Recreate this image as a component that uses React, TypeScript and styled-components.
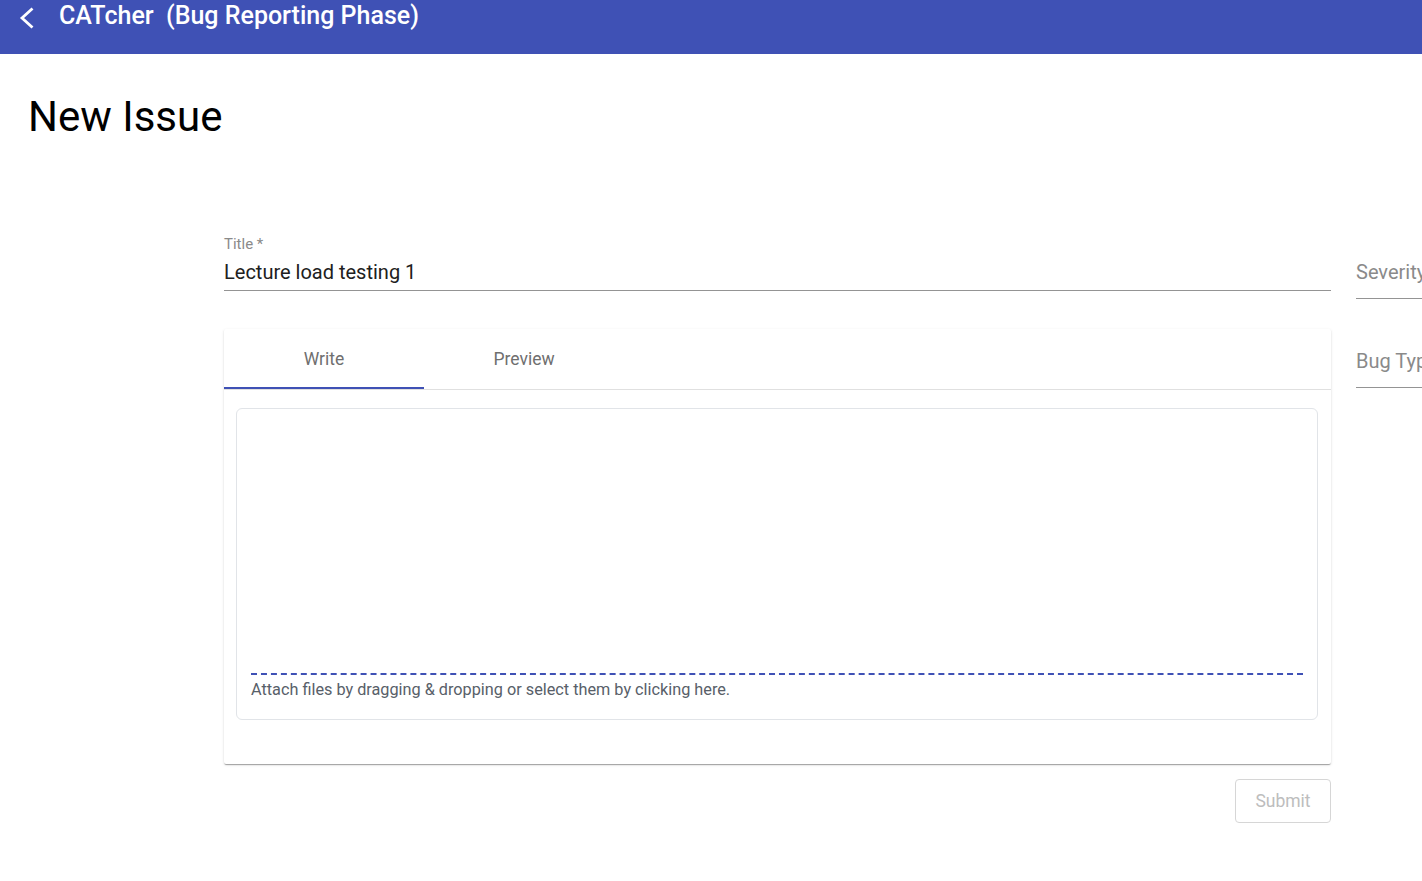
import React from "react";
import styled, { createGlobalStyle } from "styled-components";

const GlobalStyle = createGlobalStyle`
  html, body {
    margin: 0;
    padding: 0;
    background: #ffffff;
    font-family: Roboto, "Helvetica Neue", Arial, sans-serif;
    overflow: hidden;
  }
`;

const Toolbar = styled.header`
  height: 54px;
  background: #3f51b5;
  color: #ffffff;
  display: flex;
  align-items: flex-start;
  padding: 2px 0 0 14px;
  box-sizing: border-box;
`;

const BackButton = styled.button`
  background: none;
  border: none;
  padding: 0;
  width: 24px;
  height: 30px;
  display: flex;
  align-items: center;
  justify-content: center;
  color: #ffffff;
  cursor: pointer;
`;

const AppTitle = styled.span`
  margin-left: 21px;
  font-size: 25px;
  font-weight: 500;
  line-height: 28px;
  white-space: pre;
`;

const Page = styled.main`
  padding: 0 28px;
`;

const Heading = styled.h1`
  margin: 38px 0 0;
  font-size: 42px;
  font-weight: 400;
  line-height: 50px;
  color: #000000;
`;

const FormRow = styled.div`
  display: flex;
  gap: 25px;
  margin: 93px 0 0 196px;
`;

const MainColumn = styled.div`
  width: 1107px;
  flex-shrink: 0;
  display: flex;
  flex-direction: column;
`;

const SideColumn = styled.div`
  width: 220px;
  flex-shrink: 0;
  display: flex;
  flex-direction: column;
  gap: 50px;
  padding-top: 25px;
`;

const Field = styled.div`
  display: flex;
  flex-direction: column;
  border-bottom: 1px solid #949494;
`;

const FieldLabel = styled.label`
  font-size: 15px;
  color: #8a8a8a;
  line-height: 18px;
`;

const FieldValue = styled.div`
  font-size: 20px;
  color: #202020;
  line-height: 24px;
  padding: 7px 0 6px;
`;

const SelectPlaceholder = styled.div`
  font-size: 20px;
  color: #8a8a8a;
  line-height: 24px;
  padding: 0 0 14px;
  white-space: nowrap;
`;

const Card = styled.section`
  margin-top: 38px;
  background: #ffffff;
  border-radius: 2px;
  box-shadow: 0 2px 1px -1px rgba(0, 0, 0, 0.2), 0 1px 1px 0 rgba(0, 0, 0, 0.14),
    0 1px 3px 0 rgba(0, 0, 0, 0.12);
  padding-bottom: 44px;
`;

const TabBar = styled.div`
  display: flex;
  border-bottom: 1px solid #e0e0e0;
`;

const Tab = styled.div<{ $active?: boolean }>`
  width: 200px;
  height: 60px;
  display: flex;
  align-items: center;
  justify-content: center;
  box-sizing: border-box;
  font-size: 17.5px;
  font-weight: 400;
  color: #6f6f6f;
  border-bottom: 2px solid ${(p) => (p.$active ? "#3f51b5" : "transparent")};
  padding-top: 2px;
`;

const Editor = styled.div`
  margin: 18px 13px 0 12px;
  height: 312px;
  border: 1px solid #e1e4e8;
  border-radius: 6px;
  display: flex;
  flex-direction: column;
  justify-content: flex-end;
  padding: 0 14px 19px;
  box-sizing: border-box;
`;

const DropZone = styled.div`
  border-top: 2px dashed #3f51b5;
  padding-top: 5px;
  font-size: 16.25px;
  color: #586069;
  line-height: 20px;
`;

const Actions = styled.div`
  display: flex;
  justify-content: flex-end;
  margin-top: 15px;
`;

const SubmitButton = styled.button`
  width: 96px;
  height: 44px;
  border: 1px solid #d6d6d6;
  border-radius: 4px;
  background: #ffffff;
  color: #bdbdbd;
  font-family: Roboto, Arial, sans-serif;
  font-size: 17.5px;
  font-weight: 400;
`;

export default function App() {
  return (
    <>
      <GlobalStyle />
      <Toolbar>
        <BackButton aria-label="Back">
          <svg width="24" height="30" viewBox="0 0 24 30">
            <polyline
              points="18.5,6.5 8,16 18.5,25.5"
              fill="none"
              stroke="#fff"
              strokeWidth="2.8"
            />
          </svg>
        </BackButton>
        <AppTitle>CATcher  (Bug Reporting Phase)</AppTitle>
      </Toolbar>
      <Page>
        <Heading>New Issue</Heading>
        <FormRow>
          <MainColumn>
            <Field>
              <FieldLabel>Title *</FieldLabel>
              <FieldValue>Lecture load testing 1</FieldValue>
            </Field>
            <Card>
              <TabBar>
                <Tab $active>Write</Tab>
                <Tab>Preview</Tab>
              </TabBar>
              <Editor>
                <DropZone>
                  Attach files by dragging &amp; dropping or select them by clicking here.
                </DropZone>
              </Editor>
            </Card>
            <Actions>
              <SubmitButton disabled>Submit</SubmitButton>
            </Actions>
          </MainColumn>
          <SideColumn>
            <Field>
              <SelectPlaceholder>Severity</SelectPlaceholder>
            </Field>
            <Field>
              <SelectPlaceholder>Bug Type</SelectPlaceholder>
            </Field>
          </SideColumn>
        </FormRow>
      </Page>
    </>
  );
}
